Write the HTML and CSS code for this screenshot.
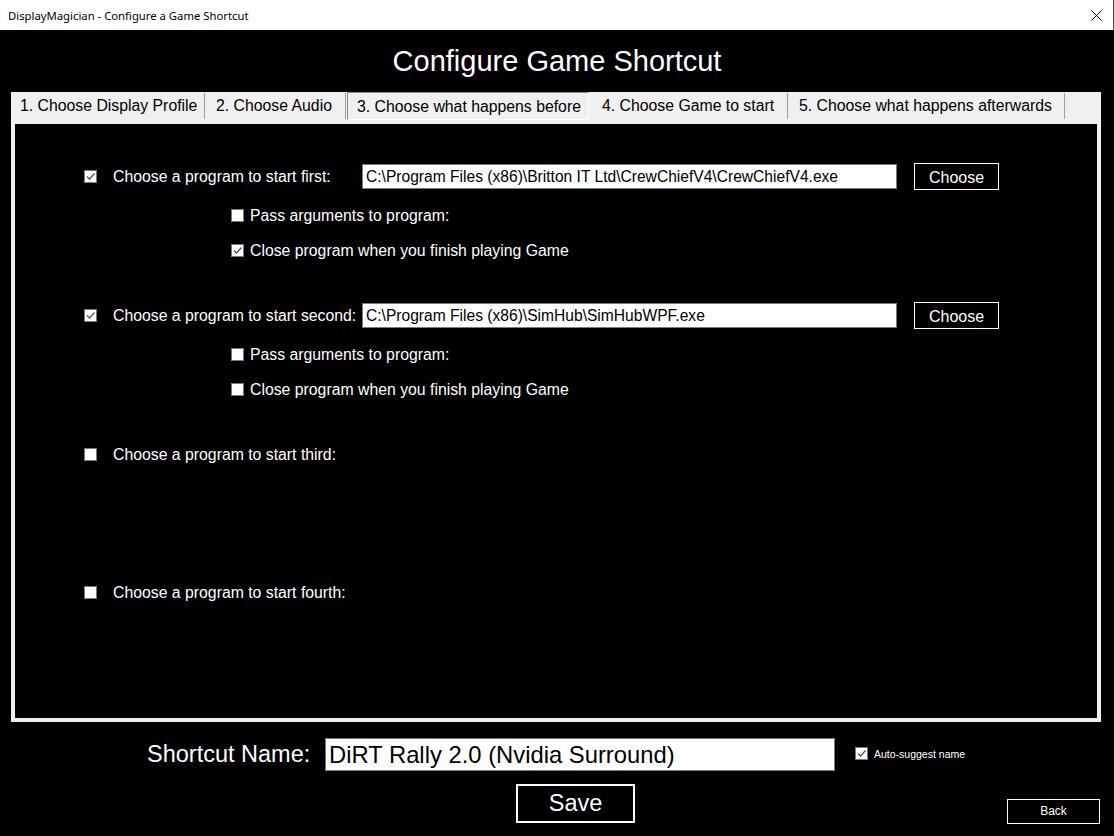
FILE: index.html
```html
<!DOCTYPE html>
<html>
<head>
<meta charset="utf-8">
<title>DisplayMagician - Configure a Game Shortcut</title>
<link rel="stylesheet" href="styles.css">
</head>
<body>
<div class="titlebar">
  <span class="titlebar-text">DisplayMagician - Configure a Game Shortcut</span>
  <svg class="close-x" width="11" height="11" viewBox="0 0 11 11"><path d="M0.5 0.5 L10.5 10.5 M10.5 0.5 L0.5 10.5" stroke="#000" stroke-width="1" fill="none"/></svg>
</div>
<div class="window">
  <h1 class="heading">Configure Game Shortcut</h1>
  <div class="tabs-wrap">
    <div class="tabbar">
      <div class="tab tab-1">1. Choose Display Profile</div>
      <div class="tab tab-2">2. Choose Audio</div>
      <div class="tab tab-3 selected">3. Choose what happens before</div>
      <div class="tab tab-4">4. Choose Game to start</div>
      <div class="tab tab-5">5. Choose what happens afterwards</div>
    </div>
    <div class="panel">
      <div class="block">
        <div class="main-row">
          <span class="cb checked"><svg viewBox="0 0 11 11" width="11" height="11"><path d="M2 5.5 L4.5 8 L9.5 2.5" stroke="#555" stroke-width="1.3" fill="none"/></svg></span>
          <span class="main-label">Choose a program to start first:</span>
          <div class="path-input">C:\Program Files (x86)\Britton IT Ltd\CrewChiefV4\CrewChiefV4.exe</div>
          <div class="choose-btn">Choose</div>
        </div>
        <div class="sub-row">
          <span class="cb"></span>
          <span class="sub-label">Pass arguments to program:</span>
        </div>
        <div class="sub-row">
          <span class="cb checked"><svg viewBox="0 0 11 11" width="11" height="11"><path d="M2 5.5 L4.5 8 L9.5 2.5" stroke="#555" stroke-width="1.3" fill="none"/></svg></span>
          <span class="sub-label">Close program when you finish playing Game</span>
        </div>
      </div>
      <div class="block">
        <div class="main-row">
          <span class="cb checked"><svg viewBox="0 0 11 11" width="11" height="11"><path d="M2 5.5 L4.5 8 L9.5 2.5" stroke="#555" stroke-width="1.3" fill="none"/></svg></span>
          <span class="main-label">Choose a program to start second:</span>
          <div class="path-input">C:\Program Files (x86)\SimHub\SimHubWPF.exe</div>
          <div class="choose-btn">Choose</div>
        </div>
        <div class="sub-row">
          <span class="cb"></span>
          <span class="sub-label">Pass arguments to program:</span>
        </div>
        <div class="sub-row">
          <span class="cb"></span>
          <span class="sub-label">Close program when you finish playing Game</span>
        </div>
      </div>
      <div class="block block-short">
        <div class="main-row">
          <span class="cb"></span>
          <span class="main-label">Choose a program to start third:</span>
        </div>
      </div>
      <div class="block">
        <div class="main-row">
          <span class="cb"></span>
          <span class="main-label">Choose a program to start fourth:</span>
        </div>
      </div>
    </div>
  </div>
  <div class="name-row">
    <span class="name-label">Shortcut Name:</span>
    <div class="name-input">DiRT Rally 2.0 (Nvidia Surround)</div>
    <span class="cb checked small-cb"><svg viewBox="0 0 11 11" width="11" height="11"><path d="M2 5.5 L4.5 8 L9.5 2.5" stroke="#555" stroke-width="1.3" fill="none"/></svg></span>
    <span class="auto-label">Auto-suggest name</span>
  </div>
  <div class="action-row">
    <div class="save-btn">Save</div>
    <div class="back-btn">Back</div>
  </div>
</div>
</body>
</html>
```
FILE: styles.css
```css
* { box-sizing: border-box; }
html, body {
  margin: 0;
  padding: 0;
  background: #000;
  width: 1114px;
  height: 836px;
  overflow: hidden;
}
body {
  font-family: "Liberation Sans", Arial, sans-serif;
  color: #fff;
}
.titlebar {
  height: 30px;
  background: #fff;
  display: flex;
  align-items: center;
  padding-left: 8px;
  border-right: 1px solid #555;
}
.titlebar-text {
  font-family: "Noto Sans", "Open Sans", sans-serif;
  font-size: 11.3px;
  color: #000;
  flex: 1;
}
.close-x {
  margin-right: 11px;
}
.window {
  display: flex;
  flex-direction: column;
}
.heading {
  margin: 0;
  height: 62px;
  font-weight: normal;
  font-size: 29px;
  text-align: center;
  line-height: 62px;
  color: #fff;
}
.tabs-wrap {
  margin-left: 11px;
  width: 1090px;
  background: #f0f0f0;
  padding: 0 4px 4px 4px;
}
.tabbar {
  display: flex;
  height: 28px;
  margin: 0 -4px 4px -4px;
}
.tab {
  color: #000;
  font-size: 15.8px;
  line-height: 26px;
  padding-left: 9px;
  white-space: nowrap;
  border-right: 1px solid #a0a0a0;
  height: 26px;
  margin-top: 1px;
}
.tab-1 { width: 194px; }
.tab-2 { width: 141px; padding-left: 11px; }
.tab-4 { width: 198px; padding-left: 12px; }
.tab-5 { width: 277px; padding-left: 11px; }
.tab.selected {
  margin-top: 0;
  height: 28px;
  margin-left: 1px;
  margin-right: 1px;
  width: 242px;
  border: 1px solid #8a8a8a;
  border-right-color: #fff;
  border-bottom-color: #fff;
  padding-left: 9px;
  line-height: 28px;
}
.panel {
  height: 594px;
  background: #000;
  padding-top: 38px;
}
.block {
  height: 139px;
}
.block-short {
  height: 138px;
}
.main-row {
  display: flex;
  align-items: center;
  height: 28px;
  padding-left: 69px;
}
.cb {
  width: 13px;
  height: 13px;
  background: #fff;
  border: 1px solid #7a7a7a;
  display: flex;
  align-items: center;
  justify-content: center;
  flex: none;
}
.cb svg { display: block; }
.main-label {
  margin-left: 16px;
  width: 249px;
  font-size: 15.8px;
  padding-top: 2px;
  white-space: nowrap;
}
.path-input {
  width: 535px;
  height: 25px;
  background: #fff;
  border: 1px solid #7a7a7a;
  color: #000;
  font-size: 15.6px;
  line-height: 24px;
  padding-left: 3px;
  white-space: nowrap;
  overflow: hidden;
}
.choose-btn {
  margin-left: 17px;
  width: 85px;
  height: 27px;
  border: 1px solid #fff;
  font-size: 16px;
  text-align: center;
  line-height: 27px;
}
.sub-row {
  display: flex;
  align-items: center;
  height: 20px;
  margin-top: 15px;
  padding-left: 216px;
}
.sub-label {
  margin-left: 6px;
  font-size: 15.8px;
  padding-top: 2px;
  white-space: nowrap;
}
.name-row {
  display: flex;
  align-items: center;
  margin-top: 16px;
  height: 33px;
  padding-left: 147px;
}
.name-label {
  font-size: 23.5px;
  width: 178px;
  white-space: nowrap;
}
.name-input {
  width: 510px;
  height: 33px;
  background: #fff;
  border: 1px solid #7a7a7a;
  color: #000;
  font-size: 23.8px;
  line-height: 31px;
  padding-left: 3px;
  white-space: nowrap;
}
.small-cb {
  margin-left: 20px;
  margin-top: -2px;
}
.auto-label {
  margin-left: 6px;
  margin-top: -1px;
  font-size: 10.5px;
  white-space: nowrap;
}
.action-row {
  display: flex;
  align-items: flex-start;
  margin-top: 13px;
  padding-left: 516px;
}
.save-btn {
  width: 119px;
  height: 39px;
  border: 2px solid #fff;
  font-size: 23.5px;
  text-align: center;
  line-height: 35px;
}
.back-btn {
  margin-left: auto;
  margin-right: 14px;
  margin-top: 15px;
  width: 93px;
  height: 25px;
  border: 1px solid #fff;
  font-size: 12px;
  text-align: center;
  line-height: 23px;
}
```
